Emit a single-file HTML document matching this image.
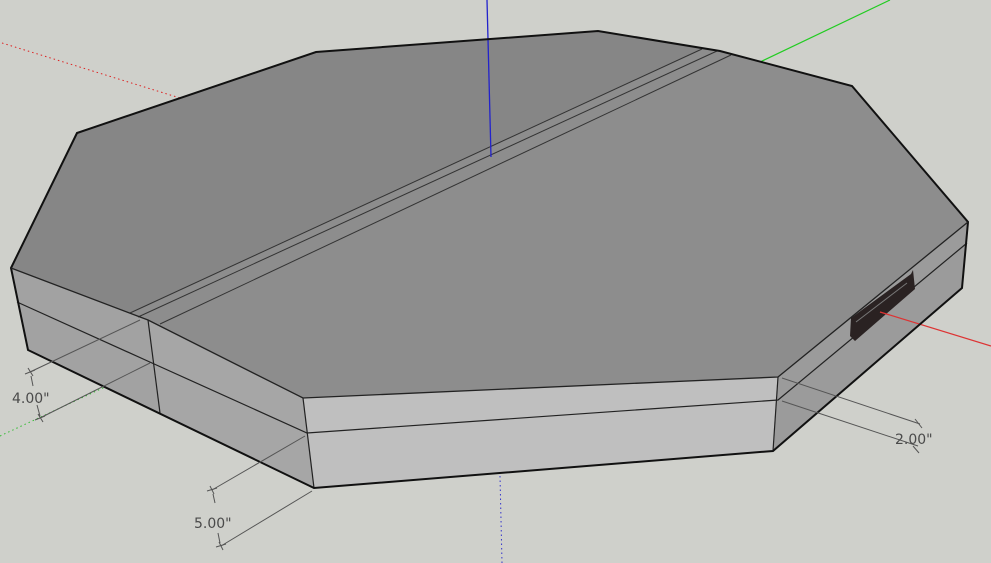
<!DOCTYPE html>
<html><head><meta charset="utf-8"><style>
html,body{margin:0;padding:0;background:#cfd0cb;overflow:hidden}
svg{display:block}
text{font-family:"DejaVu Sans","Liberation Sans",sans-serif;font-size:14px;fill:#4a4a4a}
</style></head><body>
<svg width="991" height="563" viewBox="0 0 991 563" xmlns="http://www.w3.org/2000/svg">
<rect width="991" height="563" fill="#cfd0cb"/>
<!-- axes behind -->
<line x1="2" y1="43" x2="180" y2="98" stroke="#d22" stroke-width="1" stroke-dasharray="1.5,3"/>
<line x1="760" y1="62" x2="890" y2="0" stroke="#2c2" stroke-width="1.2"/>
<line x1="0" y1="436" x2="150" y2="366" stroke="#3b3" stroke-width="1" stroke-dasharray="1.5,3"/>
<line x1="500" y1="476" x2="502" y2="563" stroke="#33c" stroke-width="1" stroke-dasharray="1.5,3"/>
<!-- left side faces -->
<polygon points="11,268 148,320 160,413 28,350" fill="#a2a2a2"/>
<polygon points="148,320 303,398 314,488 160,413" fill="#a6a6a6"/>
<!-- front -->
<polygon points="303,398 778,377 773,451 314,488" fill="#bfbfbf"/>
<!-- right -->
<polygon points="778,377 968,222 962,288 773,451" fill="#9b9b9b"/>
<!-- top -->
<polygon points="11,268 77,133 316,52 598,31 720,51 852,86 968,222 778,377 303,398 148,320" fill="#8d8d8d"/>
<polygon points="11,268 77,133 316,52 598,31 702,49 130,313" fill="#868686"/>
<!-- grooves -->
<g stroke="#333" stroke-width="1" fill="none">
<line x1="702" y1="49" x2="130" y2="313"/>
<line x1="717" y1="51" x2="138" y2="317"/>
<line x1="731" y1="55" x2="160" y2="324"/>
</g>
<!-- blue axis -->
<line x1="487" y1="0" x2="491" y2="157" stroke="#22c" stroke-width="1.3"/>
<!-- mid lines -->
<g stroke="#222" stroke-width="1.2" fill="none">
<polyline points="17,302 152,363 307,433 778,400 967,243"/>
<line x1="148" y1="320" x2="160" y2="413"/>
<line x1="303" y1="398" x2="314" y2="488"/>
<line x1="778" y1="377" x2="773" y2="451"/>
</g>
<!-- dark slot -->
<polygon points="850,336 851,318 911,274 913,270 915,289 855,341" fill="#2a2222"/>
<line x1="856" y1="322" x2="907" y2="283" stroke="#777" stroke-width="1"/>
<!-- red axis -->
<line x1="880" y1="312" x2="991" y2="346" stroke="#d33" stroke-width="1.2"/>
<!-- outline -->
<polygon points="11,268 77,133 316,52 598,31 720,51 852,86 968,222 962,288 773,451 314,488 28,350" fill="none" stroke="#111" stroke-width="2"/>
<polyline points="11,268 148,320 303,398 778,377 968,222" fill="none" stroke="#222" stroke-width="1.3"/>
<!-- dimensions -->
<g stroke="#555" stroke-width="1" fill="none">
<line x1="30" y1="372" x2="140" y2="320"/>
<line x1="40" y1="418" x2="150" y2="363"/>
<line x1="28" y1="368" x2="33" y2="376"/><line x1="25" y1="374" x2="35" y2="370"/>
<line x1="38" y1="414" x2="43" y2="422"/><line x1="35" y1="420" x2="45" y2="416"/>
<line x1="31" y1="376" x2="33" y2="386"/><line x1="37" y1="405" x2="40" y2="416"/>
<line x1="212" y1="490" x2="305" y2="436"/>
<line x1="221" y1="546" x2="312" y2="491"/>
<line x1="210" y1="486" x2="214" y2="494"/><line x1="207" y1="491" x2="217" y2="488"/>
<line x1="219" y1="542" x2="223" y2="550"/><line x1="216" y1="547" x2="226" y2="544"/>
<line x1="213" y1="494" x2="215" y2="503"/><line x1="218" y1="533" x2="220" y2="543"/>
<line x1="782" y1="378" x2="920" y2="424"/>
<line x1="782" y1="401" x2="918" y2="446"/>
<line x1="915" y1="419" x2="922" y2="428"/><line x1="913" y1="446" x2="919" y2="453"/>
</g>
<text x="12" y="403">4.00"</text>
<text x="194" y="528">5.00"</text>
<text x="895" y="444">2.00"</text>
</svg>
</body></html>
